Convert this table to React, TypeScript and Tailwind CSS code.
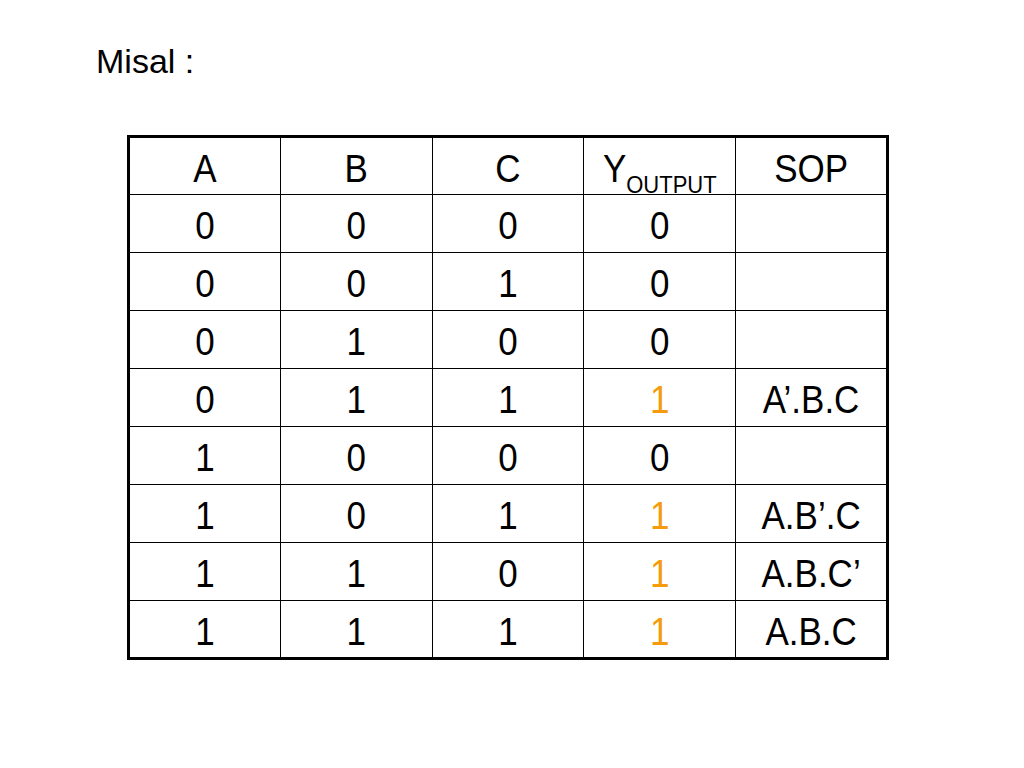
const rows: [string, string, string, string, string][] = [
  ["0", "0", "0", "0", ""],
  ["0", "0", "1", "0", ""],
  ["0", "1", "0", "0", ""],
  ["0", "1", "1", "1", "A’.B.C"],
  ["1", "0", "0", "0", ""],
  ["1", "0", "1", "1", "A.B’.C"],
  ["1", "1", "0", "1", "A.B.C’"],
  ["1", "1", "1", "1", "A.B.C"],
];

function Cell({ children, className = "" }: { children?: React.ReactNode; className?: string }) {
  return (
    <td className={`border border-black p-0 pt-[5px] text-center align-middle ${className}`}>
      <span className="inline-block scale-y-[1.12]">{children}</span>
    </td>
  );
}

export default function App() {
  return (
    <div
      className="h-[768px] w-[1024px] bg-white text-black"
      style={{ fontFamily: '"Liberation Sans", Arial, sans-serif' }}
    >
      <div className="pl-[96px] pt-[41px] text-[34px] leading-[40px]">Misal :</div>
      <div className="pl-[127px] pt-[54px]">
        <table className="w-[762px] table-fixed border-collapse border-[3px] border-black text-[35px] leading-[40px]">
          <tbody>
            <tr className="h-[58px]">
              <Cell>A</Cell>
              <Cell>B</Cell>
              <Cell>C</Cell>
              <Cell>
                Y<sub className="relative top-[9px] align-baseline text-[22px]">OUTPUT</sub>
              </Cell>
              <Cell>SOP</Cell>
            </tr>
            {rows.map((r, i) => (
              <tr key={i} className="h-[58px]">
                <Cell>{r[0]}</Cell>
                <Cell>{r[1]}</Cell>
                <Cell>{r[2]}</Cell>
                <Cell className={r[3] === "1" ? "text-[#f59b0c]" : ""}>{r[3]}</Cell>
                <Cell>{r[4]}</Cell>
              </tr>
            ))}
          </tbody>
        </table>
      </div>
    </div>
  );
}
